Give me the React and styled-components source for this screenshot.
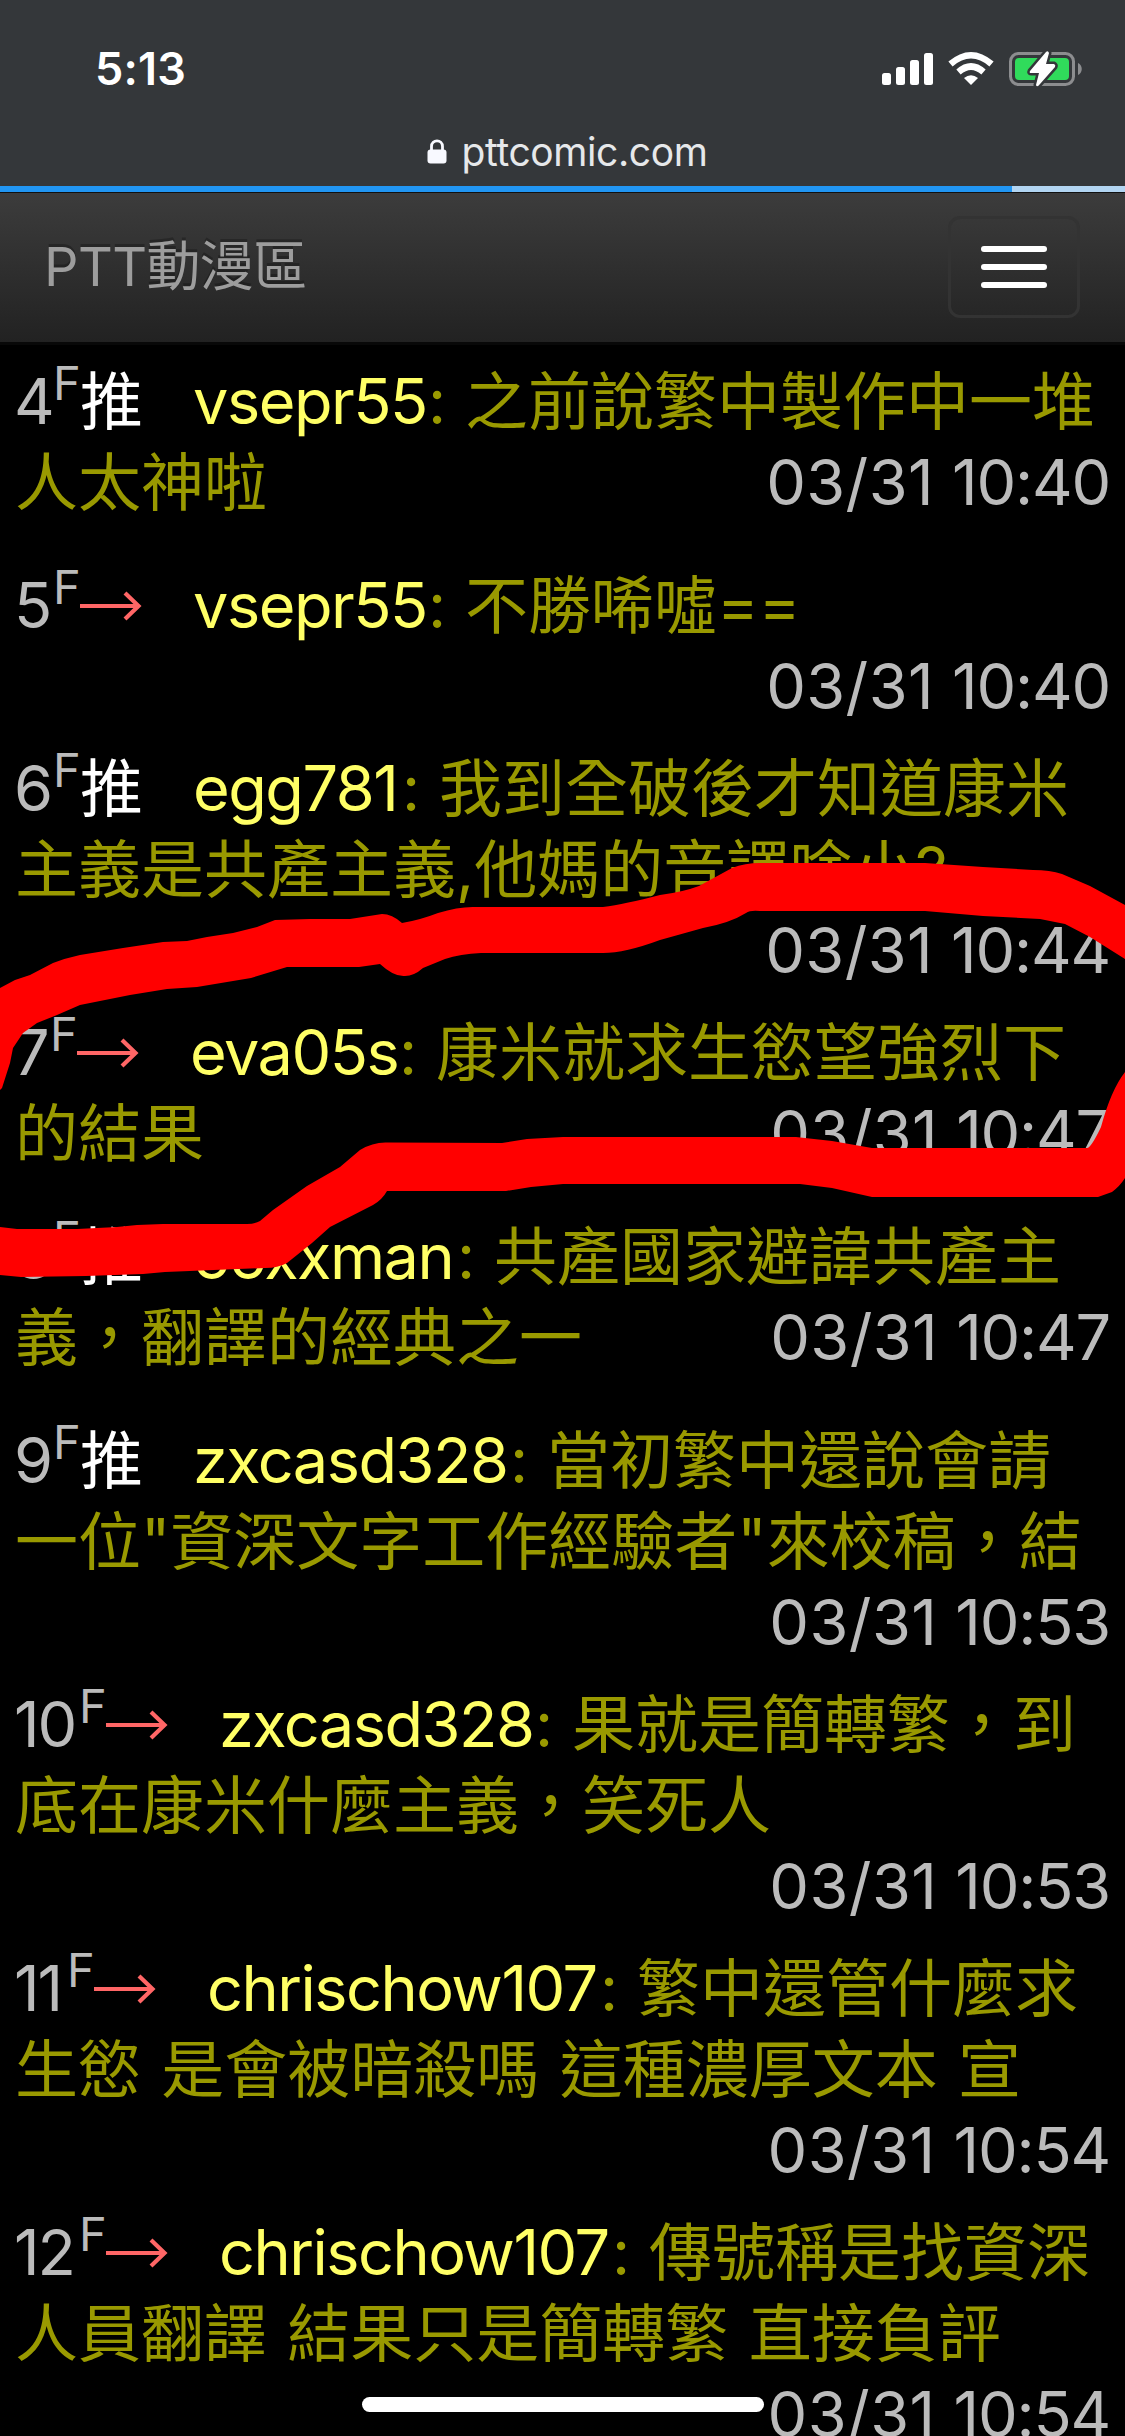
import React from "react";
import styled, { createGlobalStyle } from "styled-components";

const GlobalStyle = createGlobalStyle`
  html, body { margin: 0; background: #000; }
  body { overflow: hidden; }
  * { box-sizing: border-box; }
`;

const Screen = styled.div`
  position: relative;
  width: 1125px;
  height: 2436px;
  overflow: hidden;
  background: #000;
  font-family: Inter, "Noto Sans CJK TC", sans-serif;
`;

const BrowserHeader = styled.header`
  height: 186px;
  background: #34373a;
  color: #fff;
`;

const StatusBar = styled.div`
  display: flex;
  justify-content: space-between;
  align-items: center;
  height: 138px;
  padding: 0 41px 0 95px;
`;

const Clock = styled.time`
  font-size: 45px;
  font-weight: 600;
  line-height: 54px;
  letter-spacing: 0.2px;
`;

const StatusIcons = styled.svg`
  display: block;
  width: 204px;
  height: 40px;
`;

const AddressBar = styled.div`
  display: flex;
  justify-content: center;
  align-items: center;
  gap: 15px;
  height: 26px;
  margin-left: 9px;
  color: #e6e8ea;
  font-size: 39px;
  letter-spacing: -0.4px;
`;

const LockIcon = styled.svg`
  width: 20px;
  height: 25px;
  color: #f8f9ff;
`;

const Progress = styled.div`
  height: 7px;
  background: #b2d5f2;
  border-bottom: 1px solid #111;
`;

const ProgressFill = styled.div`
  width: 1012px;
  height: 6px;
  background: #2196f3;
`;

const NavBar = styled.nav`
  display: flex;
  align-items: center;
  justify-content: space-between;
  height: 152px;
  padding: 0 45px 2px 44px;
  background: linear-gradient(#3c3c3c, #222);
  border-bottom: 3px solid #080808;
`;

const Brand = styled.span`
  color: #9d9d9d;
  font-size: 54px;
  font-weight: 400;
  line-height: 60px;
  letter-spacing: -0.6px;
  text-shadow: 0 -3px 0 rgba(0, 0, 0, 0.25);
`;

const MenuButton = styled.button`
  display: flex;
  flex-direction: column;
  justify-content: center;
  align-items: center;
  gap: 12px;
  width: 132px;
  height: 102px;
  padding: 0;
  background: transparent;
  border: 3px solid #333;
  border-radius: 12px;
`;

const MenuLine = styled.span`
  width: 66px;
  height: 6px;
  border-radius: 3px;
  background: #fff;
`;

const Comments = styled.main`
  padding: 16px 15px 0;
  font-size: 63px;
  font-weight: 400;
  white-space: pre;
`;

const Comment = styled.article`
  margin-bottom: ${(p) => (p.$inlineDate ? 42 : 21)}px;
`;

const Line = styled.div`
  display: flex;
  align-items: baseline;
  justify-content: ${(p) => (p.$end ? "flex-end" : "flex-start")};
  height: 81px;
  line-height: 81px;
`;

const Floor = styled.span`
  width: ${(p) => p.$width}px;
  margin-left: -1px;
  color: #bbb;
  letter-spacing: -2px;
`;

const FloorMark = styled.sup`
  width: 27px;
  color: #bbb;
  font-size: 47px;
  line-height: 0;
  vertical-align: baseline;
  transform: translateY(-24px);
`;

const Tag = styled.span`
  display: flex;
  align-items: ${(p) => (p.$text ? "baseline" : "center")};
  align-self: ${(p) => (p.$text ? "baseline" : "flex-start")};
  width: 63px;
  height: 81px;
  margin-right: 50px;
  color: #fff;
`;

const Author = styled.span`
  width: ${(p) => p.$width}px;
  color: #ff6;
  letter-spacing: -1.5px;
`;

const Message = styled.span`
  color: #990;
  word-spacing: 2.6px;
`;

const Colon = styled(Message)`
  width: 37px;
`;

const PostedAt = styled.time`
  display: flex;
  gap: 18px;
  margin-left: auto;
  color: #bbb;
`;

const Day = styled.span`
  letter-spacing: 0.4px;
`;

const Hour = styled.span`
  letter-spacing: -1.2px;
`;

const Marker = styled.svg`
  position: absolute;
  inset: 0;
  width: 1125px;
  height: 2436px;
  pointer-events: none;
`;

const HomeIndicator = styled.div`
  position: absolute;
  left: 362px;
  top: 2397px;
  width: 402px;
  height: 15px;
  border-radius: 8px;
  background: #fff;
`;

const Arrow = () => (
  <svg width="63" height="40" viewBox="0 0 63 40" fill="none" stroke="#f66" strokeWidth="4.2">
    <path d="M0 20H58.5M45 7L58.500 20L45 33" />
  </svg>
);

const comments = [
  { floor: "4", fw: 39, push: true, author: "vsepr55", aw: 235, lines: ["之前說繁中製作中一堆", "人太神啦"], day: "03/31", hour: "10:40", inline: true },
  { floor: "5", fw: 39, author: "vsepr55", aw: 235, lines: ["不勝唏噓=="], day: "03/31", hour: "10:40" },
  { floor: "6", fw: 39, push: true, author: "egg781", aw: 209, lines: ["我到全破後才知道康米", "主義是共產主義,他媽的音譯啥小?"], day: "03/31", hour: "10:44" },
  { floor: "7", fw: 36, author: "eva05s", aw: 209, lines: ["康米就求生慾望強烈下", "的結果"], day: "03/31", hour: "10:47", inline: true },
  { floor: "8", fw: 39, push: true, author: "ooxxman", aw: 264, lines: ["共產國家避諱共產主", "義，翻譯的經典之一"], day: "03/31", hour: "10:47", inline: true },
  { floor: "9", fw: 39, push: true, author: "zxcasd328", aw: 317, lines: ["當初繁中還說會請", "一位\"資深文字工作經驗者\"來校稿，結"], day: "03/31", hour: "10:53" },
  { floor: "10", fw: 65, author: "zxcasd328", aw: 316, lines: ["果就是簡轉繁，到", "底在康米什麼主義，笑死人"], day: "03/31", hour: "10:53" },
  { floor: "11", fw: 53, author: "chrischow107", aw: 393, lines: ["繁中還管什麼求", "生慾 是會被暗殺嗎 這種濃厚文本 宣"], day: "03/31", hour: "10:54" },
  { floor: "12", fw: 65, author: "chrischow107", aw: 393, lines: ["傳號稱是找資深", "人員翻譯 結果只是簡轉繁 直接負評"], day: "03/31", hour: "10:54" },
];

function CommentItem({ item }) {
  const [first, second] = item.lines;
  const posted = (
    <PostedAt>
      <Day>{item.day}</Day>
      <Hour>{item.hour}</Hour>
    </PostedAt>
  );
  return (
    <Comment $inlineDate={item.inline}>
      <Line>
        <Floor $width={item.fw}>{item.floor}</Floor>
        <FloorMark>F</FloorMark>
        <Tag $text={item.push}>{item.push ? "推" : <Arrow />}</Tag>
        <Author $width={item.aw}>{item.author}</Author>
        <Colon>:</Colon>
        <Message>{first}</Message>
      </Line>
      {second && (
        <Line>
          <Message>{second}</Message>
          {item.inline && posted}
        </Line>
      )}
      {!item.inline && <Line $end>{posted}</Line>}
    </Comment>
  );
}

export default function App() {
  return (
    <Screen>
      <GlobalStyle />
      <BrowserHeader>
        <StatusBar>
          <Clock>5:13</Clock>
          <StatusIcons viewBox="880 49 204 40">
            <g fill="#fff">
              <rect x="882" y="73" width="9" height="12" rx="2.5" />
              <rect x="896" y="67" width="9" height="18" rx="2.5" />
              <rect x="910" y="60" width="9" height="25" rx="2.5" />
              <rect x="924" y="53" width="9" height="32" rx="2.5" />
              <path d="M964 78Q971 72.500 978 78L971 85Z" />
            </g>
            <g fill="none" stroke="#fff" strokeWidth="6.500">
              <path d="M950.500 64Q971 46.500 991.500 64" />
              <path d="M958.500 72Q971 61 983.500 72" />
            </g>
            <rect x="1010.500" y="53.500" width="63" height="31" rx="8" fill="none" stroke="#8c8d8f" strokeWidth="3" />
            <path d="M1078 63C1083 65 1083 73 1078 75Z" fill="#8c8d8f" />
            <rect x="1015" y="58" width="54" height="22" rx="4" fill="#30db5b" />
            <path d="M1046 52L1030 71Q1029 73 1031 73H1039L1036 85Q1037 88 1040 84L1055 67Q1056 65 1054 64H1046L1049 53Q1048 50 1046 52Z" fill="#fff" stroke="#34373a" strokeWidth="5" paintOrder="stroke" />
          </StatusIcons>
        </StatusBar>
        <AddressBar>
          <LockIcon viewBox="0 0 20 25">
            <path d="M4.500 12V7.500C4.500 0 15.500 0 15.500 7.500V12" fill="none" stroke="currentColor" strokeWidth="2.800" />
            <rect x="0.500" y="10.500" width="19" height="14" rx="3" fill="currentColor" />
          </LockIcon>
          <span>pttcomic.com</span>
        </AddressBar>
      </BrowserHeader>
      <Progress><ProgressFill /></Progress>
      <NavBar>
        <Brand>PTT動漫區</Brand>
        <MenuButton aria-label="Menu">
          <MenuLine /><MenuLine /><MenuLine />
        </MenuButton>
      </NavBar>
      <Comments>
        {comments.map((item) => <CommentItem key={item.floor} item={item} />)}
      </Comments>
      <Marker viewBox="0 0 1125 2436" fill="#f00">
        <path d="M0 988L15 980L30 975L53 963Q66 958 80 955L123 948L163 942L187 941L207 937L233 933L257 927L275 920L310 919H350L382 914Q392 914 402 923Q420 920 438 913Q460 906 477 907H603Q625 904 660 895Q683 892 699 886L732 868Q745 863 760 863H925L983 867L1033 870Q1050 870 1062 874L1090 886L1125 905V959L1090 937L1065 924L1040 919L983 916L925 911H760Q750 910 746 913Q730 923 703 928L660 940Q625 953 603 953H481Q460 954 445 959L423 968Q414 976 405 976Q394 977 380 964L359 967H287L251 978L197 987L167 989L130 995L100 1001L80 1005L57 1015L37 1023L23 1033L13 1048L10 1063L2 1088L0 1090Z" />
        <path d="M0 1227L17 1229H77L117 1227L137 1225L163 1224H247Q255 1224 260 1221L273 1210L307 1186L340 1167L360 1150Q373 1142 387 1142.500L502 1143L527 1139L563 1137H796L832 1141L872 1148H1087Q1091 1148 1101 1127Q1111 1090 1125 1072V1178Q1120 1186 1112 1192L1098 1197H872L832 1188L800 1184H563L531 1187L506 1191H387Q382 1200 373 1205L330 1227L312 1243L287 1263Q278 1268 265 1268L165 1272L143 1274L86 1276L21 1277L0 1275Z" />
      </Marker>
      <HomeIndicator />
    </Screen>
  );
}
